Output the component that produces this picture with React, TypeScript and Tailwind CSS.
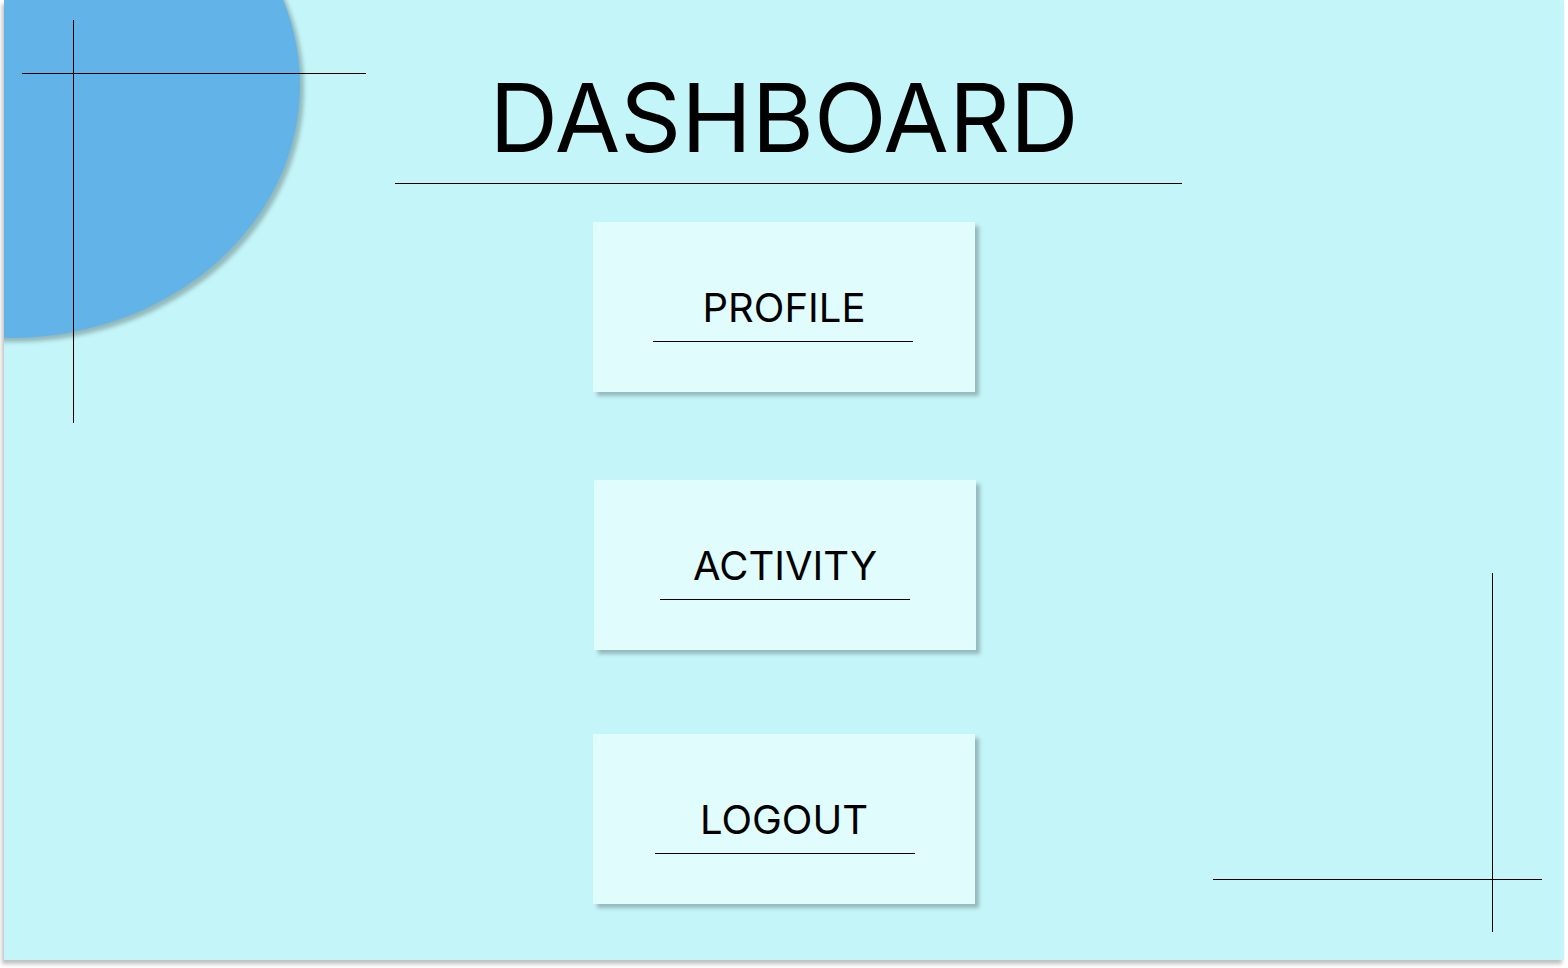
const cards = [
  { label: "PROFILE", lineClass: "ml-[60px] w-[260px]", gapClass: "mt-[38px]" },
  { label: "ACTIVITY", lineClass: "ml-[66px] w-[250px]", gapClass: "mt-[88px] translate-x-px" },
  { label: "LOGOUT", lineClass: "ml-[62px] w-[260px]", gapClass: "mt-[84px]" },
];

export default function App() {
  return (
    <div className="min-h-[968px] w-full bg-white font-['Inter','Noto_Sans',sans-serif] text-black">
      <main className="relative ml-1 h-[960px] w-[1560px] overflow-hidden bg-[#c4f6f9] shadow-[-2px_4px_4px_rgba(0,0,0,0.25)]">
        {/* decorations */}
        <div className="absolute left-[-284px] top-[-168px] h-[506px] w-[580px] rounded-[50%] bg-[#62b4e8] shadow-[4px_4px_4px_rgba(0,0,0,0.25)]" />
        <div className="absolute left-[69px] top-[20px] h-[403px] w-px bg-black" />
        <div className="absolute left-[18px] top-[73px] h-px w-[344px] bg-black" />
        <div className="absolute left-[1209px] top-[879px] h-px w-[329px] bg-black" />
        <div className="absolute left-[1488px] top-[573px] h-[359px] w-px bg-black" />

        <div className="relative flex flex-col items-center">
          <h1 className="mt-[70px] text-[95px] font-normal leading-none">DASHBOARD</h1>
          <div className="mt-[18px] h-px w-[787px] translate-x-[4px] bg-black" />

          {cards.map((card) => (
            <button
              key={card.label}
              type="button"
              className={`flex h-[170px] w-[382px] flex-col bg-[#e0fcfd] shadow-[4px_4px_4px_rgba(0,0,0,0.25)] ${card.gapClass}`}
            >
              <span className="mt-[66px] self-center text-[40px] leading-none">{card.label}</span>
              <span className={`mt-[13px] block h-px bg-black ${card.lineClass}`} />
            </button>
          ))}
        </div>
      </main>
    </div>
  );
}
